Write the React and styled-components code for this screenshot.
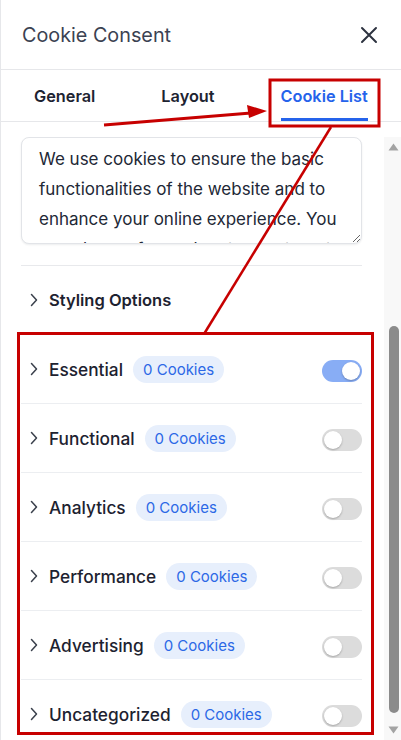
import React from "react";
import styled, { createGlobalStyle } from "styled-components";

const GlobalStyle = createGlobalStyle`
  * { box-sizing: border-box; }
  body {
    margin: 0;
    background: #ffffff;
    font-family: Inter, "Noto Sans", sans-serif;
  }
`;

const Panel = styled.div`
  position: relative;
  width: 401px;
  height: 740px;
  display: flex;
  flex-direction: column;
  background: #ffffff;
  border-left: 1px solid #e6e7ea;
  overflow: hidden;
`;

const Header = styled.div`
  height: 70px;
  flex-shrink: 0;
  display: flex;
  align-items: center;
  justify-content: space-between;
  padding: 0 23px 0 21px;
  border-bottom: 1px solid #e6e7ea;
`;

const Title = styled.div`
  font-size: 19.8px;
  color: #3b4252;
  font-weight: 400;
`;

const CloseButton = styled.button`
  border: none;
  background: none;
  padding: 0;
  display: flex;
  color: #2d3340;
  cursor: pointer;
`;

const Tabs = styled.div`
  height: 52px;
  flex-shrink: 0;
  display: flex;
  gap: 66px;
  padding-left: 33px;
  border-bottom: 1px solid #e6e7ea;
`;

const Tab = styled.div`
  display: flex;
  align-items: center;
  font-size: 16.3px;
  font-weight: 600;
  padding-top: 3px;
  color: ${(p) => (p.$active ? "#2563eb" : "#1d2331")};
  border-bottom: 3px solid ${(p) => (p.$active ? "#2563eb" : "transparent")};
`;

const Body = styled.div`
  flex: 1;
  display: flex;
  padding-top: 15px;
  min-height: 0;
`;

const Content = styled.div`
  flex: 1;
  padding: 0 22px 0 20px;
  overflow: hidden;
`;

const Message = styled.textarea`
  display: block;
  width: 100%;
  height: 107px;
  margin: 0;
  padding: 6px 17px;
  border: 1px solid #e2e4e8;
  border-radius: 8px;
  box-shadow: 0 1px 2px rgba(16, 24, 40, 0.08);
  font-family: Inter, "Noto Sans", sans-serif;
  font-size: 17px;
  line-height: 30px;
  color: #222836;
  resize: vertical;
  overflow: hidden;
  outline: none;
`;

const Divider = styled.div`
  height: 1px;
  background: #e8e9ec;
  margin-top: 21px;
`;

const Row = styled.div`
  height: 69px;
  display: flex;
  align-items: center;
  padding-left: 9px;
  border-bottom: 1px solid ${(p) => (p.$last ? "transparent" : "#eceef1")};
`;

const Chevron = styled.span`
  display: flex;
  width: 10px;
  margin-right: 9px;
  color: #3a404c;
`;

const Name = styled.span`
  font-size: ${(p) => (p.$bold ? "16.5px" : "17.3px")};
  font-weight: ${(p) => (p.$bold ? 600 : 500)};
  color: #1d2230;
`;

const Badge = styled.span`
  margin-left: 10px;
  height: 27px;
  padding: 0 10px;
  display: flex;
  align-items: center;
  border-radius: 14px;
  background: #e7effc;
  color: #2c68e6;
  font-size: 15px;
  font-weight: 400;
`;

const Switch = styled.span`
  margin: 3px 0 0 auto;
  width: 40px;
  height: 22px;
  border-radius: 11px;
  padding: 2px;
  display: flex;
  justify-content: ${(p) => (p.$on ? "flex-end" : "flex-start")};
  background: ${(p) => (p.$on ? "#88adf5" : "#dcdcdc")};
`;

const Knob = styled.span`
  width: 18px;
  height: 18px;
  border-radius: 50%;
  background: #ffffff;
  box-shadow: 0 1px 2px rgba(0, 0, 0, 0.25);
`;

const Scrollbar = styled.div`
  width: 17px;
  flex-shrink: 0;
  display: flex;
  flex-direction: column;
  align-items: center;
  background: #f8f8f8;
`;

const ScrollArrow = styled.div`
  height: 20px;
  display: flex;
  align-items: center;
  justify-content: center;
  padding-left: 2px;
`;

const Track = styled.div`
  flex: 1;
  display: flex;
  flex-direction: column;
  justify-content: flex-end;
  padding: 0 0 7px 3px;
`;

const Thumb = styled.div`
  width: 10px;
  height: 387px;
  border-radius: 5px;
  background: #8b8b8b;
`;

const Overlay = styled.svg`
  position: absolute;
  top: 0;
  left: 0;
  pointer-events: none;
`;

const categories = [
  { name: "Essential", on: true },
  { name: "Functional" },
  { name: "Analytics" },
  { name: "Performance" },
  { name: "Advertising" },
  { name: "Uncategorized" },
];

const ChevronIcon = () => (
  <svg width="8" height="14" viewBox="0 0 8 14" fill="none">
    <path d="M1.5 1.5 L6.5 7 L1.5 12.5" stroke="currentColor" strokeWidth="1.5" strokeLinecap="round" strokeLinejoin="round" />
  </svg>
);

const App = () => {
  return (
    <>
      <GlobalStyle />
      <Panel>
        <Header>
          <Title>Cookie Consent</Title>
          <CloseButton aria-label="Close">
            <svg width="18" height="18" viewBox="0 0 18 18">
              <path d="M2 2 L16 16 M16 2 L2 16" stroke="currentColor" strokeWidth="2" strokeLinecap="round" />
            </svg>
          </CloseButton>
        </Header>
        <Tabs>
          <Tab>General</Tab>
          <Tab>Layout</Tab>
          <Tab $active>Cookie List</Tab>
        </Tabs>
        <Body>
          <Content>
            <Message
              readOnly
              defaultValue="We use cookies to ensure the basic functionalities of the website and to enhance your online experience. You can choose for each category to opt-in/out whenever you want."
            />
            <Divider />
            <Row>
              <Chevron><ChevronIcon /></Chevron>
              <Name $bold>Styling Options</Name>
            </Row>
            {categories.map((c, i) => (
              <Row key={c.name} $last={i === categories.length - 1}>
                <Chevron><ChevronIcon /></Chevron>
                <Name>{c.name}</Name>
                <Badge>0 Cookies</Badge>
                <Switch $on={c.on}>
                  <Knob />
                </Switch>
              </Row>
            ))}
          </Content>
          <Scrollbar>
            <ScrollArrow>
              <svg width="11" height="8" viewBox="0 0 11 8"><path d="M5.5 0.5 L10.5 7.5 L0.5 7.5 Z" fill="#a3a3a3" /></svg>
            </ScrollArrow>
            <Track>
              <Thumb />
            </Track>
            <ScrollArrow>
              <svg width="11" height="8" viewBox="0 0 11 8"><path d="M0.5 0.5 L10.5 0.5 L5.5 7.5 Z" fill="#a3a3a3" /></svg>
            </ScrollArrow>
          </Scrollbar>
        </Body>
        <Overlay width="401" height="740" viewBox="0 0 401 740">
          <rect x="269" y="80" width="109" height="46" fill="none" stroke="#c70000" strokeWidth="3" />
          <rect x="17.5" y="333.5" width="354" height="400" fill="none" stroke="#c70000" strokeWidth="3" />
          <line x1="103" y1="125" x2="250" y2="113" stroke="#c70000" strokeWidth="3" />
          <path d="M266 111 L246 105 L248 118 Z" fill="#c70000" />
          <line x1="330" y1="127" x2="203" y2="334" stroke="#c70000" strokeWidth="2.5" />
        </Overlay>
      </Panel>
    </>
  );
};

export default App;
